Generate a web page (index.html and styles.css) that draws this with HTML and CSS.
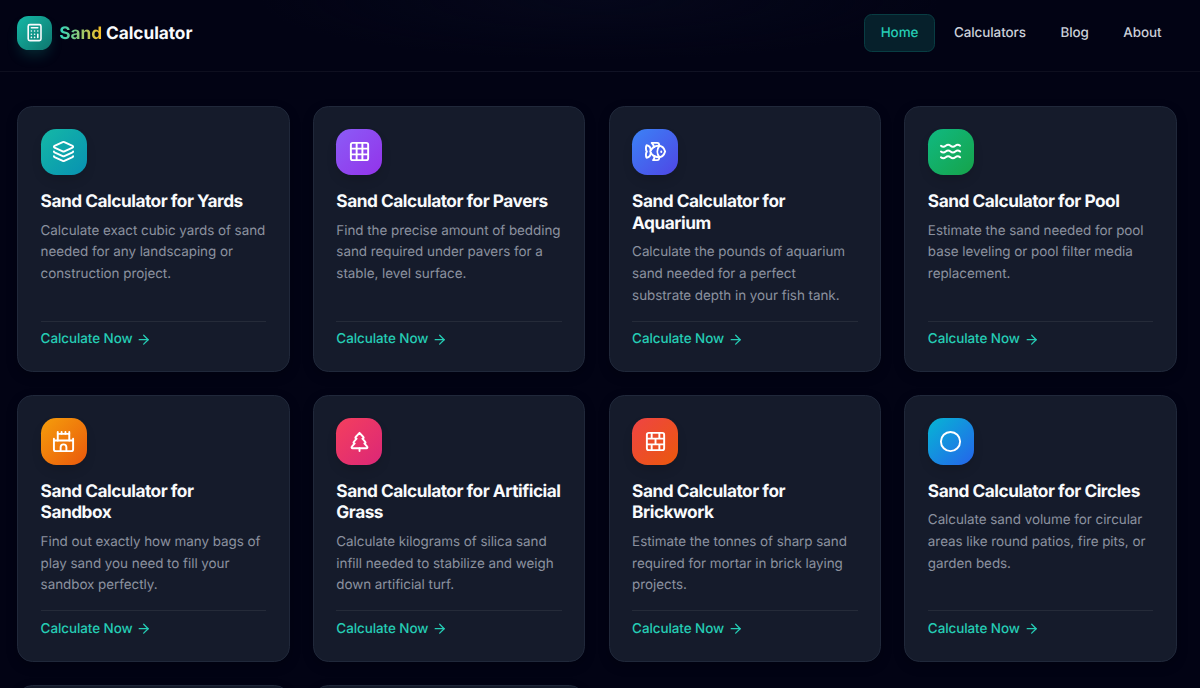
FILE: index.html
```html
<!DOCTYPE html>
<html lang="en">

<head>
    <meta charset="UTF-8">
    <meta name="viewport" content="width=device-width, initial-scale=1.0">
    <title>Sand Calculator</title>
    <link rel="stylesheet" href="styles.css">
</head>

<body>

    <!-- shared icon for the card links -->
    <svg class="sprite" aria-hidden="true">
        <symbol id="arrow" viewBox="0 0 24 24">
            <path d="M5 12h14"/><path d="m12 5 7 7-7 7"/>
        </symbol>
    </svg>

    <header class="header">
        <a class="logo" href="#">
            <span class="logo-icon">
                <svg class="icon" viewBox="0 0 24 24"><rect width="16" height="20" x="4" y="2" rx="2"/><path d="M8 6h8M16 14v4M16 10h.01M12 10h.01M8 10h.01M12 14h.01M8 14h.01M12 18h.01M8 18h.01"/></svg>
            </span>
            <span class="logo-text"><span class="logo-accent">Sand</span> Calculator</span>
        </a>
        <nav class="nav">
            <a class="nav-link active" href="#">Home</a>
            <a class="nav-link" href="#">Calculators</a>
            <a class="nav-link" href="#">Blog</a>
            <a class="nav-link" href="#">About</a>
        </nav>
    </header>

    <main class="cards">
        <a class="card" href="#">
            <span class="card-icon teal">
                <svg class="icon" viewBox="0 0 24 24"><path d="M12.83 2.18a2 2 0 0 0-1.66 0L2.6 6.08a1 1 0 0 0 0 1.83l8.58 3.91a2 2 0 0 0 1.66 0l8.58-3.9a1 1 0 0 0 0-1.83z"/><path d="M2 12a1 1 0 0 0 .58.91l8.6 3.91a2 2 0 0 0 1.65 0l8.58-3.9A1 1 0 0 0 22 12"/><path d="M2 17a1 1 0 0 0 .58.91l8.6 3.91a2 2 0 0 0 1.65 0l8.58-3.9A1 1 0 0 0 22 17"/></svg>
            </span>
            <h3>Sand Calculator for Yards</h3>
            <p>Calculate exact cubic yards of sand needed for any landscaping or construction project.</p>
            <span class="card-link">Calculate Now <svg class="icon"><use href="#arrow"/></svg></span>
        </a>

        <a class="card" href="#">
            <span class="card-icon purple">
                <svg class="icon" viewBox="0 0 24 24"><rect width="18" height="18" x="3" y="3" rx="2"/><path d="M3 9h18M3 15h18M9 3v18M15 3v18"/></svg>
            </span>
            <h3>Sand Calculator for Pavers</h3>
            <p>Find the precise amount of bedding sand required under pavers for a stable, level surface.</p>
            <span class="card-link">Calculate Now <svg class="icon"><use href="#arrow"/></svg></span>
        </a>

        <a class="card" href="#">
            <span class="card-icon blue">
                <svg class="icon" viewBox="0 0 24 24"><path d="M6.5 12c.94-3.46 4.94-6 8.5-6 3.56 0 6.06 2.54 7 6-.94 3.47-3.44 6-7 6s-7.56-2.53-8.5-6Z"/><path d="M18 12v.5"/><path d="M16 17.93a9.77 9.77 0 0 1 0-11.86"/><path d="M7 10.67C7 8 5.58 5.97 2.73 5.5c-1 1.5-1 5 .23 6.5-1.24 1.5-1.24 5-.23 6.5C5.58 18.03 7 16 7 13.33"/><path d="M10.46 7.26C10.2 5.88 9.17 4.24 8 3h5.8a2 2 0 0 1 1.98 1.67l.23 1.4"/><path d="m16.01 17.93-.23 1.4A2 2 0 0 1 13.8 21H9.5a5.96 5.96 0 0 0 1.49-3.98"/></svg>
            </span>
            <h3>Sand Calculator for Aquarium</h3>
            <p>Calculate the pounds of aquarium sand needed for a perfect substrate depth in your fish tank.</p>
            <span class="card-link">Calculate Now <svg class="icon"><use href="#arrow"/></svg></span>
        </a>

        <a class="card" href="#">
            <span class="card-icon green">
                <svg class="icon" viewBox="0 0 24 24"><path d="M2 6c.6.5 1.2 1 2.5 1C7 7 7 5 9.5 5c2.6 0 2.4 2 5 2 2.5 0 2.5-2 5-2 1.3 0 1.9.5 2.5 1"/><path d="M2 12c.6.5 1.2 1 2.5 1 2.5 0 2.5-2 5-2 2.6 0 2.4 2 5 2 2.5 0 2.5-2 5-2 1.3 0 1.9.5 2.5 1"/><path d="M2 18c.6.5 1.2 1 2.5 1 2.5 0 2.5-2 5-2 2.6 0 2.4 2 5 2 2.5 0 2.5-2 5-2 1.3 0 1.9.5 2.5 1"/></svg>
            </span>
            <h3>Sand Calculator for Pool</h3>
            <p>Estimate the sand needed for pool base leveling or pool filter media replacement.</p>
            <span class="card-link">Calculate Now <svg class="icon"><use href="#arrow"/></svg></span>
        </a>

        <a class="card" href="#">
            <span class="card-icon amber">
                <svg class="icon" viewBox="0 0 24 24"><path d="M22 20v-9H2v9a2 2 0 0 0 2 2h16a2 2 0 0 0 2-2Z"/><path d="M18 11V4H6v7"/><path d="M15 22v-4a3 3 0 0 0-3-3a3 3 0 0 0-3 3v4"/><path d="M22 11V9M2 11V9M6 4V2M18 4V2M10 4V2M14 4V2"/></svg>
            </span>
            <h3>Sand Calculator for Sandbox</h3>
            <p>Find out exactly how many bags of play sand you need to fill your sandbox perfectly.</p>
            <span class="card-link">Calculate Now <svg class="icon"><use href="#arrow"/></svg></span>
        </a>

        <a class="card" href="#">
            <span class="card-icon rose">
                <svg class="icon" viewBox="0 0 24 24"><path d="m17 14 3 3.3a1 1 0 0 1-.7 1.7H4.7a1 1 0 0 1-.7-1.7L7 14h-.3a1 1 0 0 1-.7-1.7L9 9h-.2A1 1 0 0 1 8 7.3L12 3l4 4.3a1 1 0 0 1-.8 1.7H15l3 3.3a1 1 0 0 1-.7 1.7H17Z"/><path d="M12 22v-3"/></svg>
            </span>
            <h3>Sand Calculator for Artificial Grass</h3>
            <p>Calculate kilograms of silica sand infill needed to stabilize and weigh down artificial turf.</p>
            <span class="card-link">Calculate Now <svg class="icon"><use href="#arrow"/></svg></span>
        </a>

        <a class="card" href="#">
            <span class="card-icon red">
                <svg class="icon" viewBox="0 0 24 24"><rect width="18" height="18" x="3" y="3" rx="2"/><path d="M12 9v6M16 15v6M16 3v6M3 15h18M3 9h18M8 15v6M8 3v6"/></svg>
            </span>
            <h3>Sand Calculator for Brickwork</h3>
            <p>Estimate the tonnes of sharp sand required for mortar in brick laying projects.</p>
            <span class="card-link">Calculate Now <svg class="icon"><use href="#arrow"/></svg></span>
        </a>

        <a class="card" href="#">
            <span class="card-icon cyan">
                <svg class="icon" viewBox="0 0 24 24"><circle cx="12" cy="12" r="10"/></svg>
            </span>
            <h3>Sand Calculator for Circles</h3>
            <p>Calculate sand volume for circular areas like round patios, fire pits, or garden beds.</p>
            <span class="card-link">Calculate Now <svg class="icon"><use href="#arrow"/></svg></span>
        </a>

        <a class="card" href="#"></a>
        <a class="card" href="#"></a>
    </main>

</body>

</html>
```
FILE: styles.css
```css
:root {
    --background-color: #020314;
    --card-color: #151b2b;
    --primary-color: #25cdb5;
    --text-color: #f8fafc;
    --muted-color: #8b919f;
    --line-color: rgba(255, 255, 255, 0.07);
}

* {
    margin: 0;
    padding: 0;
    box-sizing: border-box;
}

html {
    font-size: 15.36px;
}

body {
    height: 688px;
    overflow: hidden;
    font-family: 'Inter', sans-serif;
    text-rendering: geometricPrecision;
    background-color: var(--background-color);
    color: var(--text-color);
}

a {
    color: inherit;
    text-decoration: none;
}

.sprite {
    display: none;
}

.icon {
    width: 1.5rem;
    height: 1.5rem;
    fill: none;
    stroke: currentColor;
    stroke-width: 2;
    stroke-linecap: round;
    stroke-linejoin: round;
}

.header {
    display: flex;
    justify-content: space-between;
    align-items: center;
    height: 72px;
    padding: 0 23px 5px 17px;
    border-bottom: 1px solid rgba(255, 255, 255, 0.05);
    background: radial-gradient(ellipse 340px 60px at 50% 0, #05071a, transparent);
}

.logo {
    display: flex;
    align-items: center;
    gap: 0.5rem;
}

.logo-icon {
    display: flex;
    align-items: center;
    justify-content: center;
    width: 2.25rem;
    height: 2.25rem;
    border-radius: 0.75rem;
    background: linear-gradient(135deg, #14b8a6, #0f766e);
    box-shadow: 0 8px 14px -3px rgba(20, 184, 166, 0.22);
}

.logo-icon .icon {
    width: 1.25rem;
    height: 1.25rem;
}

.logo-text {
    padding-top: 2px;
    font-size: 1.125rem;
    font-weight: 700;
    letter-spacing: -0.003em;
}

.logo-accent {
    background: linear-gradient(90deg, #2dd4bf, #fbbf24);
    -webkit-background-clip: text;
    background-clip: text;
    color: transparent;
}

.nav {
    display: flex;
    align-items: center;
    gap: 0.25rem;
}

.nav-link {
    padding: 9px 1rem 7px;
    border-radius: 0.5rem;
    color: #cbd0d9;
    font-size: 0.875rem;
    font-weight: 500;
    line-height: 1.25rem;
    letter-spacing: -0.005em;
}

.nav-link.active {
    color: var(--primary-color);
    background-color: #06202b;
    border: 1px solid #083d43;
}

.cards {
    display: grid;
    grid-template-columns: repeat(4, 1fr);
    grid-auto-rows: 266.5px;
    gap: 1.5rem;
    padding: 33.9px 23px 0 17px;
}

.card {
    display: flex;
    flex-direction: column;
    align-items: flex-start;
    padding: 22px 22.6px;
    border: 1px solid #20283a;
    border-radius: 1rem;
    background-color: var(--card-color);
    box-shadow: 0 4px 12px rgba(0, 0, 0, 0.2);
}

.card h3 {
    margin-bottom: 8px;
    font-size: 1.125rem;
    font-weight: 700;
    line-height: 1.25;
    letter-spacing: -0.028em;
}

.card p {
    color: var(--muted-color);
    font-size: 0.875rem;
    line-height: 1.625;
    letter-spacing: -0.0036em;
}

.card-icon {
    display: flex;
    align-items: center;
    justify-content: center;
    width: 3rem;
    height: 3rem;
    margin-bottom: 16px;
    border-radius: 1rem;
    color: #fff;
    box-shadow: 0 6px 12px -2px rgba(0, 0, 0, 0.15);
}

.teal { background: linear-gradient(135deg, #14b8a6, #0891b2); }
.purple { background: linear-gradient(135deg, #8b5cf6, #9333ea); }
.blue { background: linear-gradient(135deg, #3b82f6, #4f46e5); }
.green { background: linear-gradient(135deg, #10b981, #16a34a); }
.amber { background: linear-gradient(135deg, #f59e0b, #ea580c); }
.rose { background: linear-gradient(135deg, #f43f5e, #db2777); }
.red { background: linear-gradient(135deg, #ef4444, #ea580c); }
.cyan { background: linear-gradient(135deg, #06b6d4, #2563eb); }

.card-link {
    display: flex;
    align-items: center;
    gap: 0.25rem;
    width: 100%;
    margin-top: auto;
    padding-top: 0.55rem;
    border-top: 1px solid var(--line-color);
    color: var(--primary-color);
    font-size: 0.875rem;
    font-weight: 500;
    line-height: 1.25rem;
    letter-spacing: -0.005em;
}

.card-link .icon {
    width: 1rem;
    height: 1rem;
    margin-bottom: 1px;
}
```
